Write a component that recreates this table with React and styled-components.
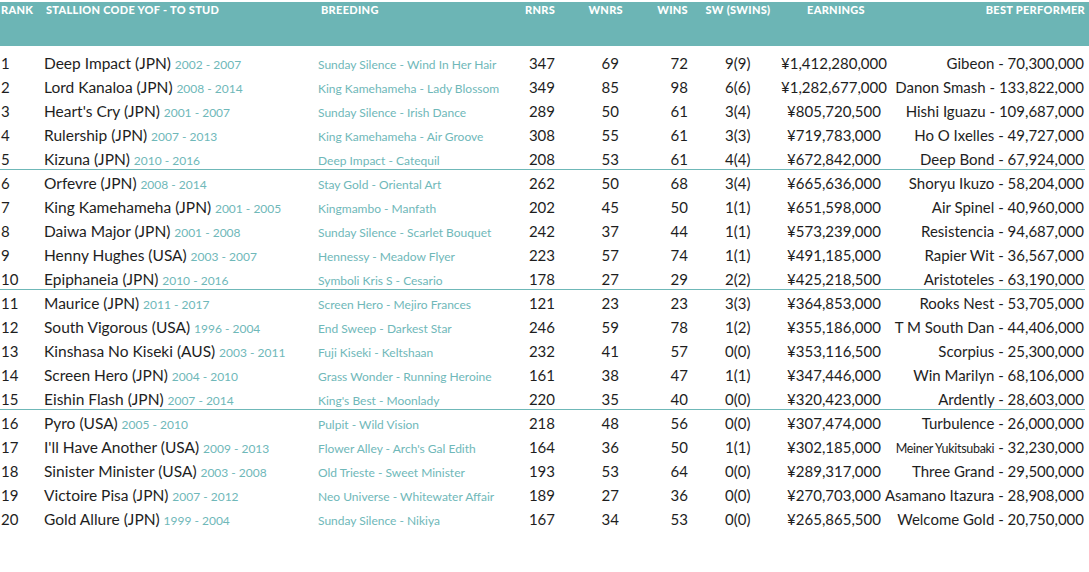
import React from "react";
import styled, { createGlobalStyle } from "styled-components";

const GlobalStyle = createGlobalStyle`
  html, body {
    margin: 0;
    padding: 0;
    background: #ffffff;
  }
  body {
    font-family: Lato, "Open Sans", sans-serif;
    color: #1e1e1e;
  }
`;

const Page = styled.div`
  width: 1089px;
  padding-top: 2px;
`;

const HeaderBand = styled.div`
  display: grid;
  grid-template-columns: 46px 275px 194px 40px 68px 65px 100px 96px 201px;
  height: 44px;
  background: #6cb5b5;
  color: #ffffff;
  font-size: 11px;
  font-weight: 900;
  letter-spacing: 0.3px;
  line-height: 14px;
  padding-top: 1px;
  box-sizing: border-box;
`;

const HeadCell = styled.div`
  text-align: ${(p) => p.$align || "left"};
  white-space: nowrap;
  padding-left: ${(p) => (p.$first ? "1px" : "0")};
`;

const Body = styled.div`
  padding-top: 4px;
`;

const Row = styled.div`
  display: grid;
  grid-template-columns: 44px 274px 197px 40px 64px 69px 92px 108px 196px;
  align-items: baseline;
  height: 24px;
  box-sizing: border-box;
  padding-top: 3px;
  line-height: 20px;
  font-size: 15px;
  border-bottom: ${(p) => (p.$divider ? "1px solid #6fb8b8" : "none")};
  width: ${(p) => (p.$divider ? "1085px" : "auto")};
`;

const Cell = styled.div`
  white-space: nowrap;
  text-align: ${(p) => p.$align || "left"};
  padding-left: ${(p) => p.$pad || "0"};
`;

const Rank = styled.div`
  padding-left: 1px;
`;

const Name = styled.span`
  font-size: 15.5px;
`;

const Years = styled.span`
  color: #6fb8b9;
  font-size: 12px;
  font-weight: 400;
`;

const Breeding = styled.div`
  color: #6fb8b9;
  font-size: 12px;
  font-weight: 400;
  white-space: nowrap;
`;

const Small = styled.span`
  font-size: 12.5px;
  letter-spacing: -0.3px;
`;

const Performer = styled.div`
  white-space: nowrap;
  text-align: right;
  direction: rtl;
`;

const Inner = styled.span`
  direction: ltr;
  unicode-bidi: isolate;
`;

const rows = [
  ["Deep Impact (JPN)", "2002 - 2007", "Sunday Silence - Wind In Her Hair", 347, 69, 72, "9(9)", "¥1,412,280,000", "Gibeon", "70,300,000"],
  ["Lord Kanaloa (JPN)", "2008 - 2014", "King Kamehameha - Lady Blossom", 349, 85, 98, "6(6)", "¥1,282,677,000", "Danon Smash", "133,822,000"],
  ["Heart's Cry (JPN)", "2001 - 2007", "Sunday Silence - Irish Dance", 289, 50, 61, "3(4)", "¥805,720,500", "Hishi Iguazu", "109,687,000"],
  ["Rulership (JPN)", "2007 - 2013", "King Kamehameha - Air Groove", 308, 55, 61, "3(3)", "¥719,783,000", "Ho O Ixelles", "49,727,000"],
  ["Kizuna (JPN)", "2010 - 2016", "Deep Impact - Catequil", 208, 53, 61, "4(4)", "¥672,842,000", "Deep Bond", "67,924,000"],
  ["Orfevre (JPN)", "2008 - 2014", "Stay Gold - Oriental Art", 262, 50, 68, "3(4)", "¥665,636,000", "Shoryu Ikuzo", "58,204,000"],
  ["King Kamehameha (JPN)", "2001 - 2005", "Kingmambo - Manfath", 202, 45, 50, "1(1)", "¥651,598,000", "Air Spinel", "40,960,000"],
  ["Daiwa Major (JPN)", "2001 - 2008", "Sunday Silence - Scarlet Bouquet", 242, 37, 44, "1(1)", "¥573,239,000", "Resistencia", "94,687,000"],
  ["Henny Hughes (USA)", "2003 - 2007", "Hennessy - Meadow Flyer", 223, 57, 74, "1(1)", "¥491,185,000", "Rapier Wit", "36,567,000"],
  ["Epiphaneia (JPN)", "2010 - 2016", "Symboli Kris S - Cesario", 178, 27, 29, "2(2)", "¥425,218,500", "Aristoteles", "63,190,000"],
  ["Maurice (JPN)", "2011 - 2017", "Screen Hero - Mejiro Frances", 121, 23, 23, "3(3)", "¥364,853,000", "Rooks Nest", "53,705,000"],
  ["South Vigorous (USA)", "1996 - 2004", "End Sweep - Darkest Star", 246, 59, 78, "1(2)", "¥355,186,000", "T M South Dan", "44,406,000"],
  ["Kinshasa No Kiseki (AUS)", "2003 - 2011", "Fuji Kiseki - Keltshaan", 232, 41, 57, "0(0)", "¥353,116,500", "Scorpius", "25,300,000"],
  ["Screen Hero (JPN)", "2004 - 2010", "Grass Wonder - Running Heroine", 161, 38, 47, "1(1)", "¥347,446,000", "Win Marilyn", "68,106,000"],
  ["Eishin Flash (JPN)", "2007 - 2014", "King's Best - Moonlady", 220, 35, 40, "0(0)", "¥320,423,000", "Ardently", "28,603,000"],
  ["Pyro (USA)", "2005 - 2010", "Pulpit - Wild Vision", 218, 48, 56, "0(0)", "¥307,474,000", "Turbulence", "26,000,000"],
  ["I'll Have Another (USA)", "2009 - 2013", "Flower Alley - Arch's Gal Edith", 164, 36, 50, "1(1)", "¥302,185,000", "Meiner Yukitsubaki", "32,230,000", true],
  ["Sinister Minister (USA)", "2003 - 2008", "Old Trieste - Sweet Minister", 193, 53, 64, "0(0)", "¥289,317,000", "Three Grand", "29,500,000"],
  ["Victoire Pisa (JPN)", "2007 - 2012", "Neo Universe - Whitewater Affair", 189, 27, 36, "0(0)", "¥270,703,000", "Asamano Itazura", "28,908,000"],
  ["Gold Allure (JPN)", "1999 - 2004", "Sunday Silence - Nikiya", 167, 34, 53, "0(0)", "¥265,865,500", "Welcome Gold", "20,750,000"],
];

export default function App() {
  return (
    <>
      <GlobalStyle />
      <Page>
        <HeaderBand>
          <HeadCell $first>RANK</HeadCell>
          <HeadCell>STALLION CODE YOF - TO STUD</HeadCell>
          <HeadCell>BREEDING</HeadCell>
          <HeadCell $align="right">RNRS</HeadCell>
          <HeadCell $align="right">WNRS</HeadCell>
          <HeadCell $align="right">WINS</HeadCell>
          <HeadCell $align="center">SW (SWINS)</HeadCell>
          <HeadCell $align="center">EARNINGS</HeadCell>
          <HeadCell $align="right">BEST PERFORMER</HeadCell>
        </HeaderBand>
        <Body>
          {rows.map((r, i) => (
            <Row key={r[0]} $divider={i === 4 || i === 9 || i === 14}>
              <Rank>{i + 1}</Rank>
              <Cell>
                <Name>{r[0]}</Name> <Years>{r[1]}</Years>
              </Cell>
              <Breeding>{r[2]}</Breeding>
              <Cell $align="right">{r[3]}</Cell>
              <Cell $align="right">{r[4]}</Cell>
              <Cell $align="right">{r[5]}</Cell>
              <Cell $pad="37px">{r[6]}</Cell>
              <Cell $align="center">{r[7]}</Cell>
              <Performer>
                <Inner>
                  {r[10] ? <Small>{r[8]}</Small> : r[8]} - {r[9]}
                </Inner>
              </Performer>
            </Row>
          ))}
        </Body>
      </Page>
    </>
  );
}
